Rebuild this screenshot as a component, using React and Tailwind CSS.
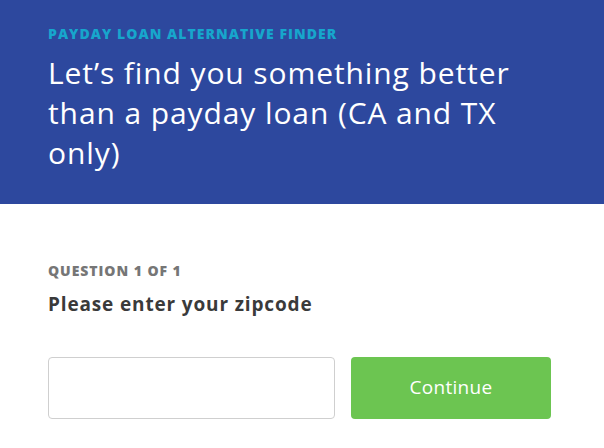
import React from 'react'

const App = () => {
  return (
    <div className="min-h-screen bg-white font-['Open_Sans','Liberation_Sans',sans-serif]">
      {/* Header */}
      <section className="h-[204px] bg-[#2d489e] px-12 pt-[23px]">
        <p className="text-[14px] font-extrabold uppercase tracking-[1.05px] text-[#17a6cc]">
          Payday Loan Alternative Finder
        </p>
        <h1 className="mt-[9px] max-w-[485px] text-[30px] leading-[40px] font-normal tracking-[0.9px] text-white">
          Let’s find you something better than a payday loan (CA and TX only)
        </h1>
      </section>

      {/* Question */}
      <section className="px-12 pt-[56px]">
        <p className="text-[14px] font-extrabold uppercase tracking-[0.95px] text-[#767676]">Question 1 of 1</p>
        <h2 className="mt-[9px] text-[19px] font-bold tracking-[0.85px] text-[#3a3a3a]">Please enter your zipcode</h2>
        <div className="mt-[38px] flex gap-4">
          <input
            type="text"
            className="h-[62px] w-[287px] rounded-[4px] border border-[#cfcfcf] bg-white px-3 outline-none"
          />
          <button className="h-[62px] w-[200px] rounded-[4px] bg-[#6cc551] text-[19px] font-medium tracking-[0.3px] text-white">
            Continue
          </button>
        </div>
      </section>
    </div>
  )
}

export default App
